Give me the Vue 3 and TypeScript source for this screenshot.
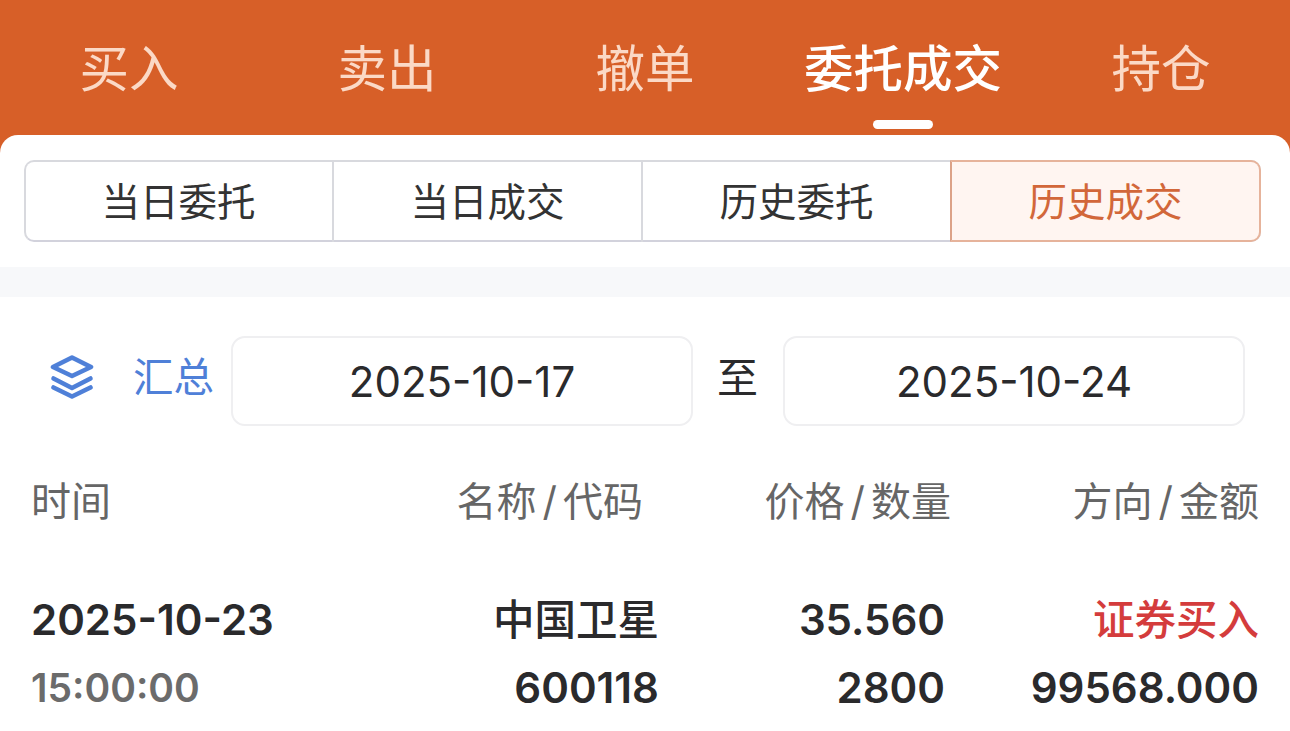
<script setup lang="ts">
import { ref } from 'vue';

const tabs = ['买入', '卖出', '撤单', '委托成交', '持仓'];
const activeTab = ref(3);

const segments = ['当日委托', '当日成交', '历史委托', '历史成交'];
const activeSegment = ref(3);

const startDate = '2025-10-17';
const endDate = '2025-10-24';

const orders = [
  {
    date: '2025-10-23',
    time: '15:00:00',
    name: '中国卫星',
    code: '600118',
    price: '35.560',
    qty: '2800',
    side: '证券买入',
    amount: '99568.000',
  },
];
</script>

<template>
  <div class="page">
    <header class="tabs">
      <div
        v-for="(tab, i) in tabs"
        :key="tab"
        class="tab"
        :class="{ active: i === activeTab }"
        @click="activeTab = i"
      >
        {{ tab }}
      </div>
    </header>

    <main class="panel">
      <div class="segment-wrap">
        <div class="segments">
          <div
            v-for="(seg, i) in segments"
            :key="seg"
            class="segment"
            :class="{ active: i === activeSegment }"
            @click="activeSegment = i"
          >
            {{ seg }}
          </div>
        </div>
      </div>

      <div class="strip"></div>

      <div class="filter">
        <div class="summary">
          <svg class="layers" viewBox="0 0 44 44" fill="none" stroke="#4f80d8" stroke-width="4.6" stroke-linecap="round" stroke-linejoin="round">
            <path d="M22 2.5 L41 12 L22 21 L3 12 Z" />
            <path d="M3.5 23.5 L22 33 L40.5 23.5" />
            <path d="M3.5 32.5 L22 41.5 L40.5 32.5" />
          </svg>
          <span class="summary-label">汇总</span>
        </div>
        <div class="date-box">{{ startDate }}</div>
        <span class="to">至</span>
        <div class="date-box second">{{ endDate }}</div>
      </div>

      <div class="thead">
        <div class="col-time">时间</div>
        <div class="col-name">名称<span class="slash">/</span>代码</div>
        <div class="col-price">价格<span class="slash">/</span>数量</div>
        <div class="col-side">方向<span class="slash">/</span>金额</div>
      </div>

      <div v-for="o in orders" :key="o.code + o.date" class="row">
        <div class="col-time">
          <div class="line num">{{ o.date }}</div>
          <div class="line muted">{{ o.time }}</div>
        </div>
        <div class="col-name">
          <div class="line cjk">{{ o.name }}</div>
          <div class="line num">{{ o.code }}</div>
        </div>
        <div class="col-price">
          <div class="line num">{{ o.price }}</div>
          <div class="line num">{{ o.qty }}</div>
        </div>
        <div class="col-side">
          <div class="line cjk buy">{{ o.side }}</div>
          <div class="line num">{{ o.amount }}</div>
        </div>
      </div>
    </main>
  </div>
</template>

<style>
html,
body {
  margin: 0;
  background: #fff;
  overflow: hidden;
}
</style>

<style scoped>
.page {
  width: 1290px;
  height: 731px;
  overflow: hidden;
  background: #d75f28;
  font-family: Inter, "Noto Sans CJK SC", sans-serif;
}

.tabs {
  display: flex;
  height: 135px;
}

.tab {
  position: relative;
  flex: 1;
  padding-top: 35px;
  line-height: 68px;
  text-align: center;
  font-size: 49.5px;
  color: #fbd9c6;
}

.tab.active {
  color: #fff;
  font-weight: 500;
}

.tab.active::after {
  content: '';
  position: absolute;
  left: 50%;
  bottom: 6px;
  width: 60px;
  height: 9px;
  margin-left: -30px;
  border-radius: 5px;
  background: #fff;
}

.panel {
  height: 596px;
  background: #fff;
  border-radius: 18px 18px 0 0;
}

.segment-wrap {
  padding: 25px 29px 25px 24px;
}

.segments {
  display: flex;
  height: 82px;
  box-sizing: border-box;
  border: 2px solid #d8d9de;
  border-bottom-color: #d2d2dc;
  border-radius: 10px;
}

.segment {
  flex: 1;
  margin: -2px 0;
  line-height: 84px;
  text-align: center;
  font-size: 38.5px;
  color: #333;
  border-right: 2px solid #d8d9de;
}

.segment:first-child {
  margin-left: -1px;
}

.segment:nth-child(3),
.segment:last-child {
  border-right: none;
}

.segment.active {
  margin-right: -2px;
  color: #d2673a;
  background: #fff5f1;
  border: 2px solid #e6b39b;
  border-left-color: #dca288;
  border-radius: 0 10px 10px 0;
  line-height: 80px;
}

.strip {
  height: 30px;
  background: #f7f8fa;
}

.filter {
  display: flex;
  align-items: center;
  height: 90px;
  margin-top: 39px;
  padding-left: 50px;
  font-size: 40px;
}

.summary {
  display: flex;
  align-items: center;
  width: 181px;
  margin-top: -10px;
  color: #4f80d8;
  font-size: 40.5px;
}

.summary-label {
  margin-bottom: 4px;
}

.layers {
  width: 44px;
  height: 44px;
  margin-top: 2px;
  margin-right: 39px;
}

.date-box {
  width: 462px;
  height: 90px;
  box-sizing: border-box;
  border: 2px solid #efeff1;
  border-radius: 14px;
  line-height: 88px;
  text-align: center;
  font-size: 42px;
  color: #2a2a2c;
}

.to {
  width: 90px;
  padding-left: 24px;
  box-sizing: border-box;
  color: #2a2a2c;
  margin-top: -12px;
  font-size: 41px;
}

.thead,
.row {
  display: flex;
  padding: 0 31px;
  font-size: 40px;
}

.thead {
  margin-top: 46px;
  line-height: 60px;
  color: #666;
}

.slash {
  margin: 0 6px;
}

.row {
  margin-top: 54px;
  color: #2a2a2c;
  font-weight: 600;
}

.col-time {
  width: 300px;
}

.col-name {
  width: 328px;
  text-align: right;
}

.col-price {
  width: 286px;
  text-align: right;
}

.col-side {
  flex: 1;
  text-align: right;
}

.thead .col-name {
  width: 312px;
}

.thead .col-price {
  width: 308px;
}

.line {
  height: 68px;
  line-height: 68px;
  font-size: 41.5px;
}

.cjk {
  font-weight: 500;
}

.num {
  font-size: 42px;
}

.muted {
  color: #6b6b6b;
  font-size: 39px;
}

.buy {
  color: #d43c3c;
}
</style>
